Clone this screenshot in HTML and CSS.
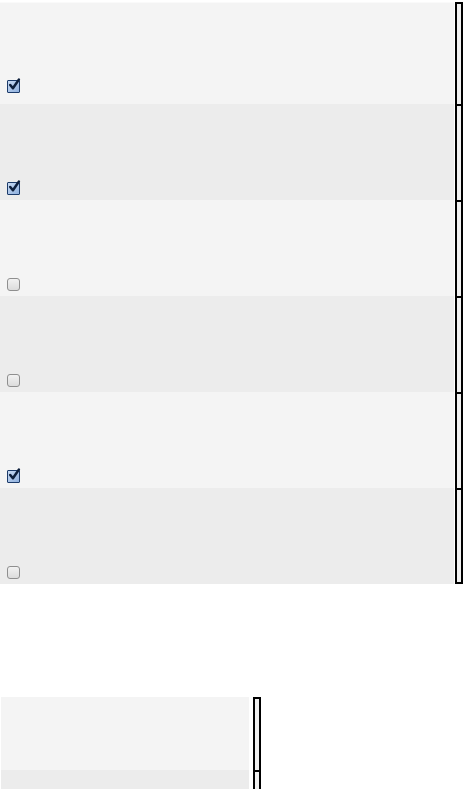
FILE: index.html
```html
<!DOCTYPE html>
<html lang="en">
<head>
<meta charset="UTF-8">
<title>Task list</title>
<link rel="stylesheet" href="styles.css">
</head>
<body>
<div class="list">
    <div class="rows">
        <div class="row first"><span class="box checked"><svg viewBox="0 0 13 13"><path d="M3 6.5 L5.5 9.5 L11 1.5" /></svg></span></div>
        <div class="row alt"><span class="box checked"><svg viewBox="0 0 13 13"><path d="M3 6.5 L5.5 9.5 L11 1.5" /></svg></span></div>
        <div class="row"><span class="box"></span></div>
        <div class="row alt"><span class="box"></span></div>
        <div class="row"><span class="box checked"><svg viewBox="0 0 13 13"><path d="M3 6.5 L5.5 9.5 L11 1.5" /></svg></span></div>
        <div class="row alt"><span class="box"></span></div>
    </div>
    <div class="bar">
        <div class="seg first"></div>
        <div class="seg"></div>
        <div class="seg"></div>
        <div class="seg"></div>
        <div class="seg"></div>
        <div class="seg"></div>
    </div>
</div>

<div class="list small">
    <div class="rows">
        <div class="row short"></div>
        <div class="row alt rest"></div>
    </div>
    <div class="bar">
        <div class="seg short"></div>
        <div class="seg rest"></div>
    </div>
</div>
</body>
</html>
```

FILE: styles.css
```css
body {
    margin: 0;
    padding: 0;
    background: #fff;
    font-family: 'Liberation Sans', Arial, sans-serif;
}
.list {
    display: flex;
    width: 463px;
    padding-top: 2px;
}
.rows {
    flex: 1;
}
.row {
    height: 96px;
    background: #f4f4f4;
    box-sizing: border-box;
    padding: 0 0 5px 7px;
    display: flex;
    align-items: flex-end;
}
.row.first {
    height: 102px;
    padding-bottom: 11px;
    border-top: 1px solid #fafafa;
}
.row.alt {
    background: #ececec;
}
.bar {
    width: 8px;
    margin-left: 1px;
}
.seg {
    height: 96px;
    border: 2px solid #000;
    border-bottom: 0;
    box-sizing: border-box;
    background: #f0f0f0;
}
.seg.first {
    height: 102px;
}
.seg:last-child {
    border-bottom: 2px solid #000;
}
.box {
    width: 13px;
    height: 13px;
    box-sizing: border-box;
    border: 1px solid #8f8f8f;
    border-radius: 3px;
    background: linear-gradient(#f2f2f2, #dcdcdc);
    display: block;
}
.box.checked {
    border: 1px solid #1c3b6a;
    border-radius: 1px;
    background: linear-gradient(135deg, #c8daf2, #8fb0de);
    position: relative;
}
.box svg {
    position: absolute;
    left: -1px;
    top: -3px;
    width: 14px;
    height: 14px;
    overflow: visible;
}
.box svg path {
    fill: none;
    stroke: #0d1f3c;
    stroke-width: 2.4;
    stroke-linecap: round;
    stroke-linejoin: round;
}
.list.small {
    width: 261px;
    margin-top: 111px;
}
.row.short,
.seg.short {
    height: 73px;
}
.row.rest,
.seg.rest {
    height: 19px;
}
.seg.rest {
    border-bottom: 0;
}
.list.small .bar {
    margin-left: 4px;
}
.list.small .row {
    margin-left: 1px;
}
```
